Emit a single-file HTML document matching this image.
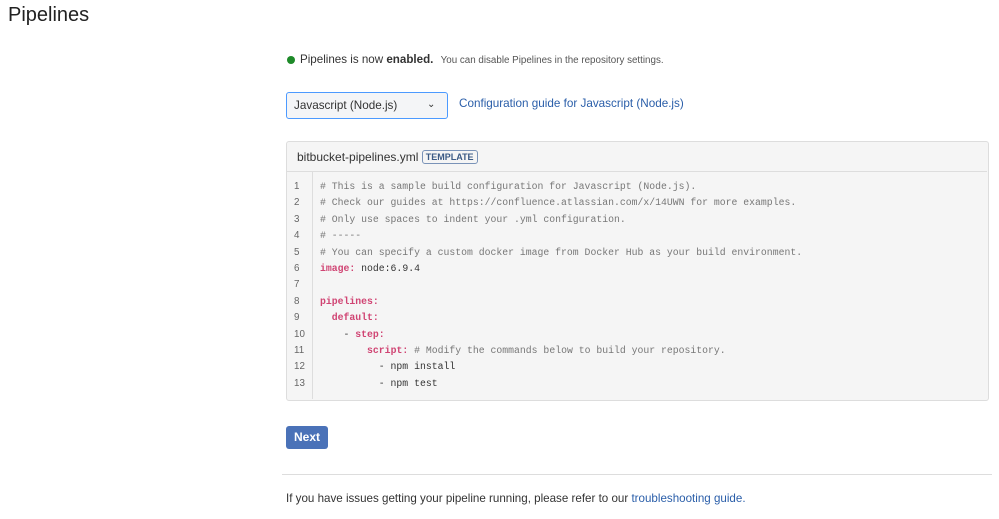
<!DOCTYPE html>
<html><head><style>
body{margin:0;width:999px;height:519px;background:#fff;font-family:"Liberation Sans",sans-serif;color:#333;position:relative;overflow:hidden}
.a{position:absolute}
pre{margin:0;font-family:"Liberation Mono",monospace;font-size:9.8px;line-height:16.4px}
.c{color:#777}.k{color:#d04473;font-weight:bold}
</style></head><body>
<div class="a" style="left:8px;top:4px;font-size:20px;color:#222">Pipelines</div>
<div class="a" style="left:287px;top:56px;width:8px;height:8px;border-radius:50%;background:#1e8a29"></div>
<div class="a" style="left:300px;top:53px;font-size:11.6px;color:#333">Pipelines is now <b>enabled.</b> <span style="font-size:9.8px;color:#555;margin-left:4px">You can disable Pipelines in the repository settings.</span></div>
<div class="a" style="left:286px;top:92px;height:25px;border:1.5px solid #4c9aff;border-radius:3px;background:#f4f5f7;font-size:11.7px;line-height:25px;padding-left:7px;width:153px">Javascript (Node.js)<span style="position:absolute;left:140px;top:-1px;font-size:10px">&#8964;</span></div>
<div class="a" style="left:459px;top:97px;font-size:11.7px;color:#2a5ea9">Configuration guide for Javascript (Node.js)</div>
<div class="a" style="left:286px;top:141px;width:701px;height:258px;border:1px solid #ddd;border-radius:3px;background:#f5f5f5"></div>
<div class="a" style="left:287px;top:171px;width:700px;border-top:1px solid #ddd"></div>
<div class="a" style="left:312px;top:172px;height:227px;border-left:1px solid #ddd"></div>
<div class="a" style="left:297px;top:150px;font-size:12px;color:#333">bitbucket-pipelines.yml <span style="display:inline-block;border:1px solid #7a93b8;border-radius:3px;font-size:9px;font-weight:bold;color:#3b5a85;padding:0 3px;line-height:12px;vertical-align:1px">TEMPLATE</span></div>
<pre class="a" style="left:294px;top:179px;color:#666;font-size:9.8px;font-family:'Liberation Sans',sans-serif">1
2
3
4
5
6
7
8
9
10
11
12
13</pre>
<pre class="a" style="left:320px;top:179px;color:#333"><span class="c"># This is a sample build configuration for Javascript (Node.js).
# Check our guides at https://confluence.atlassian.com/x/14UWN for more examples.
# Only use spaces to indent your .yml configuration.
# -----
# You can specify a custom docker image from Docker Hub as your build environment.</span>
<span class="k">image:</span> node:6.9.4

<span class="k">pipelines:</span>
  <span class="k">default:</span>
    - <span class="k">step:</span>
        <span class="k">script:</span> <span class="c"># Modify the commands below to build your repository.</span>
          - npm install
          - npm test</pre>
<div class="a" style="left:286px;top:426px;width:42px;height:23px;background:#4a72b8;border-radius:3px;color:#fff;font-size:12px;font-weight:bold;text-align:center;line-height:23px">Next</div>
<div class="a" style="left:282px;top:474px;width:710px;border-top:1px solid #ddd"></div>
<div class="a" style="left:286px;top:492px;font-size:11.6px;color:#333">If you have issues getting your pipeline running, please refer to our <span style="color:#2a5ea9">troubleshooting guide.</span></div>
</body></html>
